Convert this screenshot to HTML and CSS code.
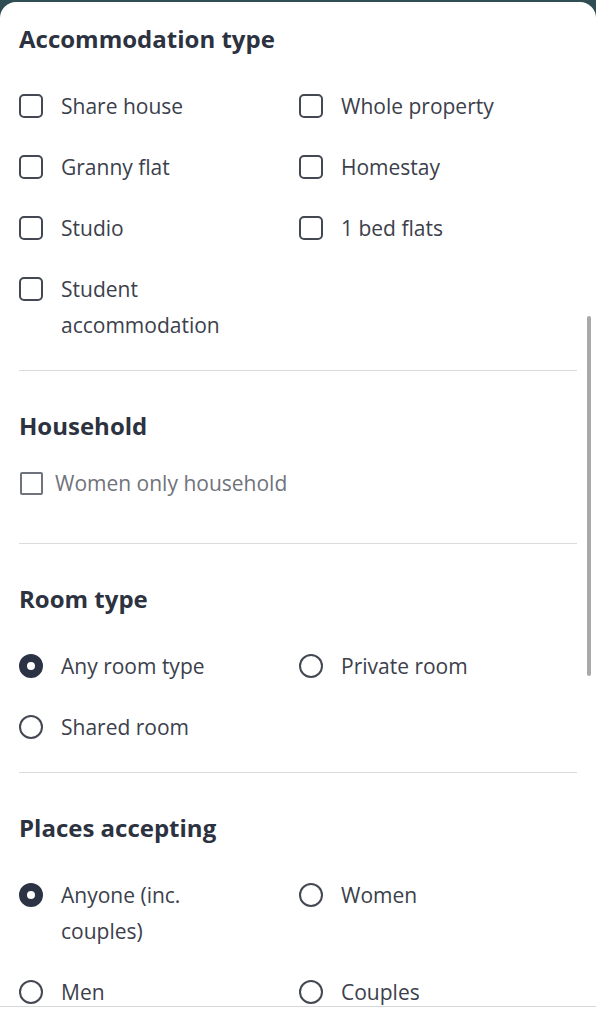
FILE: index.html
```
<!DOCTYPE html>
<html lang="en">
<head>
    <meta charset="UTF-8">
    <meta name="viewport" content="width=device-width, initial-scale=1.0">
    <title>Filters</title>
    <link rel="stylesheet" href="styles.css">
</head>
<body>
    <div class="sheet">
        <div class="scrollbar"></div>

        <section class="group first">
            <h2>Accommodation type</h2>
            <div class="options">
                <label class="option"><span class="box"></span><span>Share house</span></label>
                <label class="option"><span class="box"></span><span>Whole property</span></label>
                <label class="option"><span class="box"></span><span>Granny flat</span></label>
                <label class="option"><span class="box"></span><span>Homestay</span></label>
                <label class="option"><span class="box"></span><span>Studio</span></label>
                <label class="option"><span class="box"></span><span>1 bed flats</span></label>
                <label class="option"><span class="box"></span><span>Student accommodation</span></label>
            </div>
        </section>

        <section class="group household">
            <h2>Household</h2>
            <label class="plain-check"><span class="square"></span><span>Women only household</span></label>
        </section>

        <section class="group">
            <h2>Room type</h2>
            <div class="options">
                <label class="option"><span class="radio checked"></span><span>Any room type</span></label>
                <label class="option"><span class="radio"></span><span>Private room</span></label>
                <label class="option"><span class="radio"></span><span>Shared room</span></label>
            </div>
        </section>

        <section class="group last">
            <h2>Places accepting</h2>
            <div class="options">
                <label class="option"><span class="radio checked"></span><span>Anyone (inc. couples)</span></label>
                <label class="option"><span class="radio"></span><span>Women</span></label>
                <label class="option"><span class="radio"></span><span>Men</span></label>
                <label class="option"><span class="radio"></span><span>Couples</span></label>
            </div>
        </section>

        <div class="footer"></div>
    </div>
</body>
</html>
```

FILE: styles.css
```
body {
    margin: 0;
    background: #2f4d53;
    font-family: "Open Sans", "Noto Sans", sans-serif;
    color: #3b404b;
}
.sheet {
    position: relative;
    margin-top: 2px;
    height: 1022px;
    overflow: hidden;
    background: #fff;
    border-radius: 16px 16px 0 0;
}
.scrollbar {
    position: absolute;
    left: 587px;
    top: 314px;
    width: 4px;
    height: 360px;
    border-radius: 2px;
    background: #a9a9a9;
}

/* 分组 */
.group {
    margin: 0 19px;
    padding: 40px 0 27px;
    border-bottom: 1px solid #d9dbdf;
}
.group.first {
    padding-top: 22px;
}
.group.last {
    border-bottom: none;
    padding-bottom: 12px;
}
h2 {
    margin: 0 0 34px;
    font-size: 24px;
    line-height: 30px;
    font-weight: 700;
    color: #2c3240;
}
.options {
    display: grid;
    grid-template-columns: 280px 1fr;
    row-gap: 25px;
}
.option {
    display: flex;
    align-items: flex-start;
    gap: 18px;
    font-size: 21px;
    line-height: 36px;
    padding-right: 60px;
}
.box {
    flex: none;
    width: 20px;
    height: 20px;
    margin-top: 6px;
    border: 2px solid #434853;
    border-radius: 5px;
}
.radio {
    flex: none;
    width: 20px;
    height: 20px;
    margin-top: 6px;
    border: 2px solid #434853;
    border-radius: 50%;
}
.radio.checked {
    box-sizing: border-box;
    width: 24px;
    height: 24px;
    border: 8px solid #2c3345;
    background: #fff;
}

/* 家庭选项 */
.household {
    padding-bottom: 42px;
}
.household h2 {
    margin-bottom: 24px;
}
.plain-check {
    display: flex;
    align-items: center;
    gap: 12px;
    font-size: 21px;
    line-height: 36px;
    color: #6f737b;
}
.square {
    flex: none;
    width: 19px;
    height: 19px;
    margin-left: 1px;
    border: 2px solid #6f737b;
    border-radius: 2px;
}

/* 底部栏 */
.footer {
    position: absolute;
    left: 0;
    right: 0;
    bottom: 0;
    height: 17px;
    background: #fff;
    border-top: 1px solid #d5d7db;
}
```
